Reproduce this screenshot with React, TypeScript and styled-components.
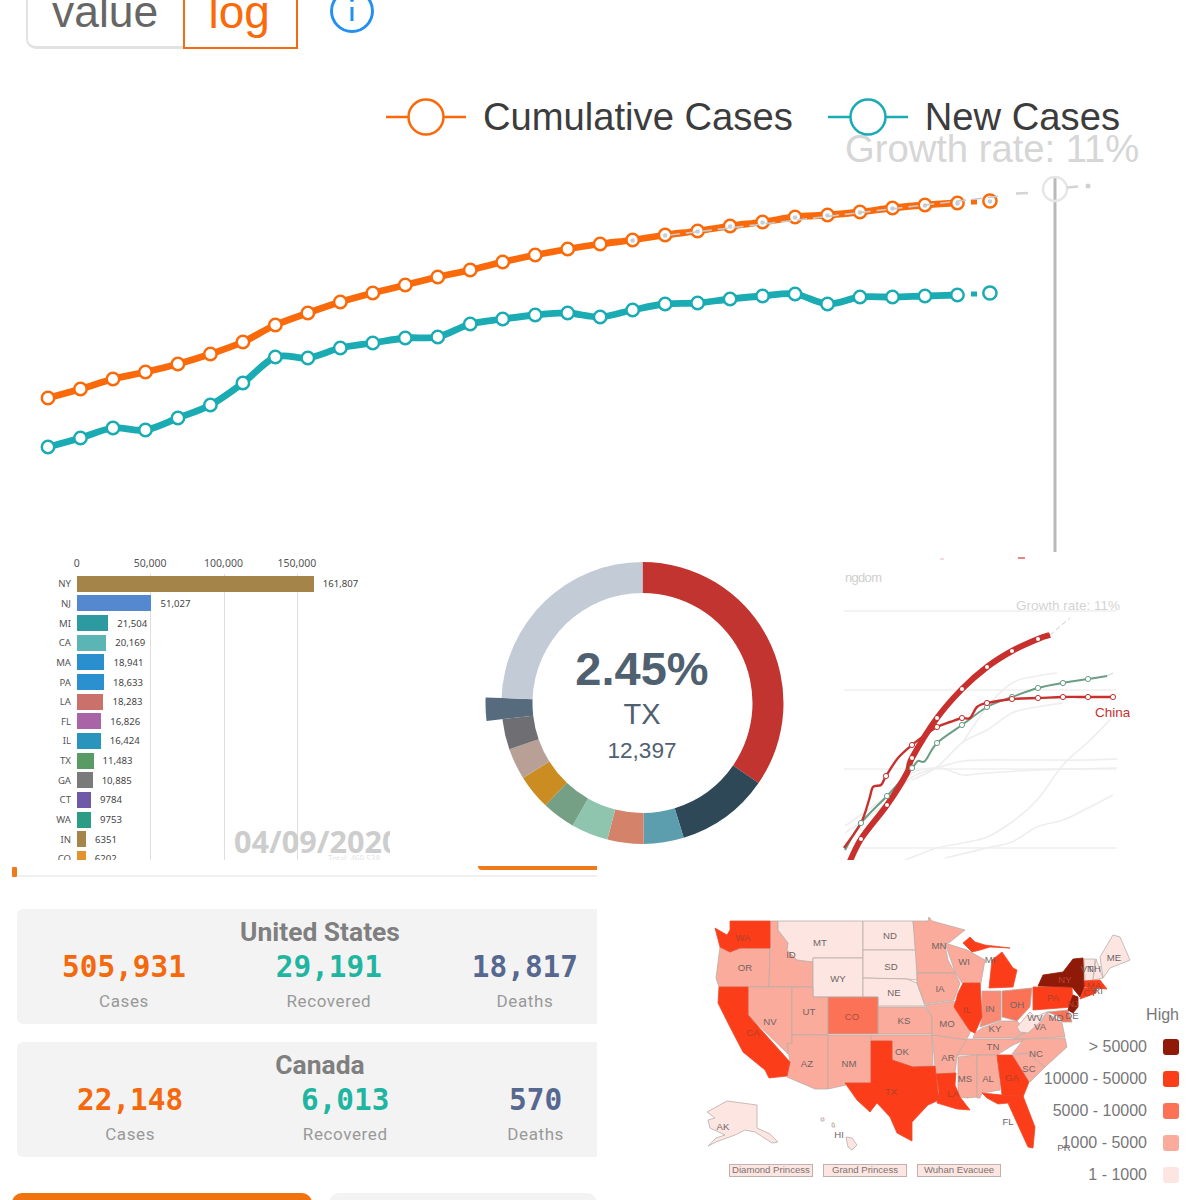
import React from "react";
import styled, { createGlobalStyle } from "styled-components";

const SANS = `"Liberation Sans", Arial, sans-serif`;
const ORANGE = "#fa6a0a";
const TEAL = "#1aabb3";

const Global = createGlobalStyle`
  html, body { margin: 0; padding: 0; background: #fff; }
  #root { width: 1200px; height: 1200px; }
`;

const Page = styled.div`
  width: 1200px;
  height: 1200px;
  overflow: hidden;
  background: #fff;
  display: flex;
  flex-direction: column;
  font-family: ${SANS};
`;

const smooth = (a: number[][], k = 0.16) => {
  let d = `M${a[0][0]} ${a[0][1]}`;
  for (let i = 0; i < a.length - 1; i++) {
    const p0 = a[Math.max(i - 1, 0)];
    const p1 = a[i];
    const p2 = a[i + 1];
    const p3 = a[Math.min(i + 2, a.length - 1)];
    const c1 = [p1[0] + (p2[0] - p0[0]) * k, p1[1] + (p2[1] - p0[1]) * k];
    const c2 = [p2[0] - (p3[0] - p1[0]) * k, p2[1] - (p3[1] - p1[1]) * k];
    d += `C${c1[0].toFixed(1)} ${c1[1].toFixed(1)} ${c2[0].toFixed(1)} ${c2[1].toFixed(1)} ${p2[0]} ${p2[1]}`;
  }
  return d;
};

/* ---------- top line chart ---------- */
const TopPanel = styled.section`
  height: 552px;
  flex: none;
  overflow: hidden;
  display: flex;
  flex-direction: column;
`;
const Toolbar = styled.div`
  height: 49px;
  flex: none;
  display: flex;
  align-items: flex-end;
  padding-left: 26px;
`;
const ToggleGroup = styled.div`
  display: flex;
  height: 90px;
  flex: none;
`;
const ToggleOption = styled.div`
  width: 157px;
  box-sizing: border-box;
  border: 2px solid #e2e2e2;
  border-bottom-width: 3px;
  border-right: none;
  border-radius: 0 0 0 10px;
  color: #666;
  font-size: 44.4px;
  line-height: 50px;
  padding: 26px 0 0 24px;
`;
const ToggleActive = styled.div`
  width: 115px;
  box-sizing: border-box;
  border: 2.5px solid #f46b16;
  color: ${ORANGE};
  font-size: 46px;
  line-height: 50px;
  padding: 26px 0 0 23.5px;
`;
const InfoIcon = styled.svg`
  width: 46px;
  height: 46px;
  flex: none;
  margin: 0 0 15px 31px;
`;
const Legend = styled.div`
  flex: none;
  display: flex;
  align-items: center;
  justify-content: flex-end;
  height: 36px;
  margin-top: 50px;
  padding-right: 80px;
  gap: 35px;
  position: relative;
  z-index: 1;
`;
const LegendItem = styled.div`
  display: flex;
  align-items: center;
  gap: 17px;
`;
const LegendMark = styled.svg`
  width: 80px;
  height: 36px;
  flex: none;
  overflow: visible;
`;
const LegendText = styled.span`
  font-size: 38.2px;
  line-height: 36px;
  color: #3c3c3c;
  white-space: nowrap;
`;
const ChartSvg = styled.svg`
  flex: 1;
  min-height: 0;
  width: 1200px;
  display: block;
  overflow: visible;
`;

const STEP = 32.48;
const orangeY = [398, 389, 379, 372, 364, 354, 342, 325, 313, 302, 293, 285, 277, 270, 262, 255, 249, 244, 240, 235, 231, 226, 222, 217, 215, 212, 208, 205, 203, 201];
const tealY = [447, 438, 428, 430, 418, 405, 383, 357, 358, 348, 343, 338, 337, 324, 319, 315, 313, 317, 310, 304, 303, 299, 296, 294, 304, 297, 297, 296, 295, 293];
const xAt = (i: number) => 48 + i * STEP;

const Series: React.FC<{ ys: number[]; color: string; dots?: boolean }> = ({ ys, color, dots }) => {
  const n = ys.length;
  const body = ys.slice(0, n - 1).map((y, i) => [Number(xAt(i).toFixed(1)), y]);
  return (
    <g>
      <path d={smooth(body)} fill="none" stroke={color} strokeWidth={6.8} strokeLinejoin="round" />
      <rect x={971} y={(ys[n - 1] + ys[n - 2]) / 2 - 2.5} width={6} height={5} fill={color} />
      {ys.map((y, i) => (
        <circle key={i} cx={xAt(i)} cy={y} r={i === n - 1 ? 6.6 : 6.2} fill="#fff" stroke={color} strokeWidth={2.5} />
      ))}
      {dots &&
        ys.map((y, i) =>
          i > 17 ? <circle key={i} cx={xAt(i)} cy={y + 0.5} r={2.3} fill="#c4cfdc" /> : null
        )}
    </g>
  );
};

const LineChart = () => (
  <ChartSvg viewBox="0 135 1200 417" preserveAspectRatio="none">
    <text x={845} y={162} fontSize={38.2} fill="#d6d6d6" fontFamily={SANS}>Growth rate: 11%</text>
    <line x1={1055} y1={177} x2={1055} y2={552} stroke="#b9b9b9" strokeWidth={3} />
    <circle cx={1055} cy={189} r={12} fill="none" stroke="#e6e6e6" strokeWidth={2.5} />
    <line x1={1016} y1={193.5} x2={1028} y2={193} stroke="#d4d4d4" strokeWidth={2.5} />
    <line x1={1067} y1={187.5} x2={1078} y2={186.5} stroke="#d4d4d4" strokeWidth={2.5} />
    <circle cx={1088} cy={186} r={2.5} fill="#d0d0d0" />
    <Series ys={orangeY} color={ORANGE} dots />
    <Series ys={tealY} color={TEAL} />
    <line x1={670} y1={235} x2={1001} y2={196} stroke="#c9c9c9" strokeWidth={1.6} strokeDasharray="10 6" />
  </ChartSvg>
);

/* ---------- middle row ---------- */
const MiddleRow = styled.section`
  height: 308px;
  flex: none;
  display: flex;
`;
const BarPanel = styled.div`
  width: 390px;
  flex: none;
  overflow: hidden;
  position: relative;
  display: flex;
  flex-direction: column;
  font-family: "Noto Sans", sans-serif;
`;
const AxisRow = styled.div`
  height: 22px;
  flex: none;
  display: flex;
  align-items: center;
  padding-left: 40px;
  box-sizing: border-box;
`;
const AxisTick = styled.span`
  width: 73.4px;
  text-align: center;
  font-size: 10.5px;
  color: #555;
`;
const Plot = styled.div`
  flex: 1;
  min-height: 0;
  overflow: hidden;
  background:
    linear-gradient(#dedede, #dedede) 150px 0 / 1px 100% no-repeat,
    linear-gradient(#dedede, #dedede) 224px 0 / 1px 100% no-repeat,
    linear-gradient(#dedede, #dedede) 297px 0 / 1px 100% no-repeat;
`;
const BarRow = styled.div`
  height: 19.65px;
  display: flex;
  align-items: center;
  font-size: 9.6px;
  color: #555;
`;
const BarLabel = styled.span`
  width: 71px;
  flex: none;
  text-align: right;
  margin-right: 5.7px;
`;
const BarFill = styled.div<{ $color: string }>`
  height: 16px;
  flex: none;
  background: ${(p) => p.$color};
`;
const BarValue = styled.span`
  margin-left: 9px;
  color: #444;
`;
const DateStamp = styled.div`
  position: absolute;
  left: 234px;
  top: 270px;
  font-size: 30.6px;
  line-height: 38px;
  font-weight: 700;
  color: #cdcdcd;
  white-space: nowrap;
`;
const TotalStamp = styled.div`
  position: absolute;
  left: 328px;
  top: 302px;
  font-size: 8px;
  line-height: 10px;
  color: #e4e4e4;
  white-space: nowrap;
`;

const bars: [string, number, string][] = [
  ["NY", 161807, "#a5844a"],
  ["NJ", 51027, "#5589cf"],
  ["MI", 21504, "#2c9aa0"],
  ["CA", 20169, "#5cb5b5"],
  ["MA", 18941, "#2a8fcf"],
  ["PA", 18633, "#2a90cf"],
  ["LA", 18283, "#c9716a"],
  ["FL", 16826, "#a964a8"],
  ["IL", 16424, "#2a94bd"],
  ["TX", 11483, "#5a9a63"],
  ["GA", 10885, "#7a7a7a"],
  ["CT", 9784, "#6f5aa8"],
  ["WA", 9753, "#2a9d84"],
  ["IN", 6351, "#a5854a"],
  ["CO", 6202, "#e3922e"],
];
const fmt = (n: number) => (n >= 10000 ? n.toLocaleString("en-US") : String(n));

const BarRace = () => (
  <BarPanel>
    <AxisRow>
      {["0", "50,000", "100,000", "150,000"].map((t) => (
        <AxisTick key={t}>{t}</AxisTick>
      ))}
    </AxisRow>
    <Plot>
      {bars.map(([s, v, c]) => (
        <BarRow key={s}>
          <BarLabel>{s}</BarLabel>
          <BarFill $color={c} style={{ width: `${(v * 237) / 161807}px` }} />
          <BarValue>{fmt(v)}</BarValue>
        </BarRow>
      ))}
    </Plot>
    <DateStamp>04/09/2020</DateStamp>
    <TotalStamp>Total: 469,538</TotalStamp>
  </BarPanel>
);

const DonutPanel = styled.div`
  width: 453px;
  flex: none;
  position: relative;
`;
const DonutSvg = styled.svg`
  width: 453px;
  height: 308px;
  display: block;
`;
const DonutCenter = styled.div`
  position: absolute;
  left: 152px;
  top: 90px;
  width: 200px;
  display: flex;
  flex-direction: column;
  align-items: center;
  color: #4f6070;
`;
const DonutPct = styled.div`
  font-size: 47px;
  line-height: 54px;
  font-weight: 700;
`;
const DonutName = styled.div`
  font-size: 29px;
  line-height: 37px;
`;
const DonutCount = styled.div`
  font-size: 22.6px;
  line-height: 35px;
`;

const polar = (r: number, deg: number) => {
  const a = (deg * Math.PI) / 180;
  return [642.5 + r * Math.sin(a), 703 - r * Math.cos(a)];
};
const sector = (a0: number, a1: number, r0: number, r1: number) => {
  const [x0, y0] = polar(r1, a0);
  const [x1, y1] = polar(r1, a1);
  const [x2, y2] = polar(r0, a1);
  const [x3, y3] = polar(r0, a0);
  const large = a1 - a0 > 180 ? 1 : 0;
  return `M${x0} ${y0}A${r1} ${r1} 0 ${large} 1 ${x1} ${y1}L${x2} ${y2}A${r0} ${r0} 0 ${large} 0 ${x3} ${y3}Z`;
};
const slices: [number, number, string, number][] = [
  [0, 124.6, "#c23430", 141],
  [124.6, 163, "#2f4858", 141],
  [163, 179.5, "#5c9eae", 141],
  [179.5, 194.4, "#d4826a", 141],
  [194.4, 209.7, "#8fc5ae", 141],
  [209.7, 223.5, "#75a085", 141],
  [223.5, 237.9, "#cb8d22", 141],
  [237.9, 250.8, "#b8a097", 141],
  [250.8, 263.4, "#6e6e73", 141],
  [263.4, 272, "#566b7d", 157],
  [272, 360, "#c3ccd6", 141],
];

const Donut = () => (
  <DonutPanel>
    <DonutSvg viewBox="390 552 453 308">
      {slices.map(([a, b, c, r]) => (
        <path key={a} d={sector(a, b, 110, r)} fill={c} />
      ))}
    </DonutSvg>
    <DonutCenter>
      <DonutPct>2.45%</DonutPct>
      <DonutName>TX</DonutName>
      <DonutCount>12,397</DonutCount>
    </DonutCenter>
  </DonutPanel>
);

const TrajPanel = styled.div`
  width: 287px;
  flex: none;
  overflow: hidden;
`;
const TrajSvg = styled.svg`
  width: 287px;
  height: 308px;
  display: block;
`;
const thick = [[847, 868], [861, 839], [887, 805], [907, 773], [912, 758], [937, 718], [962, 689], [987, 667], [1012, 651], [1038, 639], [1050, 635]];
const china = [[844, 848], [861, 823], [869, 800], [873, 787], [881, 785], [886, 776], [898, 758], [912, 745], [925, 735], [937, 727], [950, 722], [962, 718], [970, 718], [977, 707], [987, 703], [1012, 699], [1038, 698], [1063, 697], [1088, 697], [1113, 697]];
const green = [[845, 850], [861, 823], [887, 796], [912, 768], [918, 761], [925, 761], [937, 743], [962, 725], [987, 707], [1012, 697], [1038, 688], [1063, 683], [1088, 679], [1107, 676]];
const faint = [
  [[905, 860], [937, 848], [963, 843], [987, 837], [1012, 822], [1037, 800], [1063, 765], [1088, 742], [1110, 720]],
  [[945, 858], [987, 848], [1012, 842], [1037, 827], [1063, 820], [1088, 808], [1113, 795]],
  [[845, 833], [887, 803], [912, 777], [940, 767], [963, 761], [987, 760], [1013, 760], [1037, 760], [1088, 760], [1117, 759]],
  [[845, 826], [887, 796], [912, 773], [940, 768], [963, 775], [987, 773], [1037, 770], [1117, 768]],
  [[912, 780], [937, 767], [963, 742], [987, 730], [1012, 713], [1037, 707], [1063, 703]],
  [[963, 742], [987, 707], [1012, 683], [1037, 676], [1057, 673]],
];

const Trajectories = () => (
  <TrajPanel>
    <TrajSvg viewBox="843 552 287 308">
      <text x={845} y={582} fontSize={13} fill="#cfcfcf" fontFamily={SANS} textLength={37}>ngdom</text>
      {[611, 690, 769, 848].map((y) => (
        <line key={y} x1={844} x2={1116} y1={y} y2={y} stroke="#e8e8e8" strokeWidth={1.2} />
      ))}
      <line x1={940} x2={944} y1={559} y2={559} stroke="#e8b8b8" strokeWidth={1} />
      <line x1={1018} x2={1025} y1={558} y2={558} stroke="#d86060" strokeWidth={1.5} />
      <text x={1016} y={610} fontSize={13.5} fill="#d4d4d4" fontFamily={SANS}>Growth rate: 11%</text>
      {faint.map((l, i) => (
        <path key={i} d={smooth(l)} fill="none" stroke="#eeeeee" strokeWidth={1.6} />
      ))}
      <line x1={1050} y1={635} x2={1070} y2={618} stroke="#cfcfcf" strokeWidth={1} strokeDasharray="5 3" />
      <line x1={1107} y1={676} x2={1113} y2={673} stroke="#cfcfcf" strokeWidth={1} />
      <path d={smooth(green)} fill="none" stroke="#6a9e84" strokeWidth={2} />
      <path d={smooth(china)} fill="none" stroke="#c8302e" strokeWidth={2.4} />
      <path d={smooth(thick)} fill="none" stroke="#c8302e" strokeWidth={6} />
      {[[861, 823], [887, 796], [912, 768], [937, 743], [962, 725], [987, 707], [1012, 697], [1038, 688], [1063, 683], [1088, 679]].map(([x, y]) => (
        <circle key={x} cx={x} cy={y} r={2.6} fill="#fff" stroke="#6a9e84" strokeWidth={1} />
      ))}
      {[[861, 839], [887, 805], [912, 758], [937, 718], [962, 689], [987, 667], [1012, 651], [1038, 639]].map(([x, y]) => (
        <circle key={x} cx={x} cy={y} r={2} fill="#fff" />
      ))}
      {[[886, 776], [912, 745], [937, 727], [962, 718], [987, 703], [1012, 699], [1038, 698], [1063, 697], [1088, 697], [1113, 697]].map(([x, y]) => (
        <circle key={x} cx={x} cy={y} r={2.6} fill="#fff" stroke="#c8302e" strokeWidth={1} />
      ))}
      <text x={1095} y={717} fontSize={13.5} fill="#c8302e" fontFamily={SANS}>China</text>
    </TrajSvg>
  </TrajPanel>
);

/* ---------- bottom row ---------- */
const BottomRow = styled.section`
  flex: 1;
  min-height: 0;
  display: flex;
`;
const StatsColumn = styled.div`
  width: 597px;
  flex: none;
  box-sizing: border-box;
  padding-left: 12px;
  display: flex;
  flex-direction: column;
`;
const TabStrip = styled.div`
  height: 17px;
  flex: none;
  box-sizing: border-box;
  display: flex;
  justify-content: space-between;
  align-items: flex-start;
  border-bottom: 2px solid #f0f0f0;
  margin-left: 5px;
  position: relative;
`;
const TabTick = styled.div`
  position: absolute;
  left: -5px;
  top: 7px;
  width: 5px;
  height: 10px;
  border-radius: 1px;
  background: #ee7a1a;
`;
const TabPill = styled.div`
  width: 119px;
  height: 4px;
  margin: 6px 0 0 auto;
  background: #ee7a1a;
  border-radius: 0 0 0 6px;
`;
const CardStack = styled.div`
  margin: 32px 0 0 5px;
  display: flex;
  flex-direction: column;
  gap: 18px;
`;
const Card = styled.div`
  height: 115px;
  background: #f3f3f3;
  border-radius: 6px 0 0 6px;
  display: flex;
  flex-direction: column;
  padding-top: 8px;
  box-sizing: border-box;
`;
const CardTitle = styled.div`
  font-family: Roboto, sans-serif;
  font-weight: 700;
  font-size: 26.4px;
  line-height: 30px;
  text-align: center;
  color: #7f7f7f;
  padding-left: 26px;
`;
const StatRow = styled.div<{ $left: number; $right: number }>`
  display: flex;
  justify-content: space-between;
  margin-top: 2px;
  padding: 0 ${(p) => p.$right}px 0 ${(p) => p.$left}px;
`;
const Stat = styled.div`
  display: flex;
  flex-direction: column;
  align-items: center;
`;
const StatNumber = styled.div<{ $color: string }>`
  font-family: "DejaVu Sans Mono", monospace;
  font-weight: 700;
  font-size: 29.4px;
  line-height: 36px;
  color: ${(p) => p.$color};
`;
const StatLabel = styled.div`
  font-family: Roboto, sans-serif;
  font-size: 17px;
  letter-spacing: 0.6px;
  line-height: 20px;
  margin-top: 6px;
  color: #999;
  white-space: nowrap;
`;
const ActionRow = styled.div`
  display: flex;
  gap: 17px;
  margin-top: 36px;
`;
const PrimaryAction = styled.div`
  width: 300px;
  height: 40px;
  background: #f0730f;
  border-radius: 10px 10px 0 0;
`;
const SecondaryAction = styled.div`
  flex: 1;
  height: 40px;
  background: #f3f3f3;
  border-radius: 10px 10px 0 0;
`;

const C_ORANGE = "#f4690e";
const C_TEAL = "#1fb5a0";
const C_BLUE = "#56688f";

const CountryCard: React.FC<{ name: string; left: number; right: number; vals: [string, string, string] }> = ({ name, left, right, vals }) => (
  <Card>
    <CardTitle>{name}</CardTitle>
    <StatRow $left={left} $right={right}>
      <Stat>
        <StatNumber $color={C_ORANGE}>{vals[0]}</StatNumber>
        <StatLabel>Cases</StatLabel>
      </Stat>
      <Stat>
        <StatNumber $color={C_TEAL}>{vals[1]}</StatNumber>
        <StatLabel>Recovered</StatLabel>
      </Stat>
      <Stat>
        <StatNumber $color={C_BLUE}>{vals[2]}</StatNumber>
        <StatLabel>Deaths</StatLabel>
      </Stat>
    </StatRow>
  </Card>
);

const MapPanel = styled.div`
  flex: 1;
  position: relative;
  display: flex;
  flex-direction: column;
`;
const MapSvg = styled.svg`
  width: 603px;
  height: 304px;
  display: block;
  flex: none;
  overflow: visible;
`;
const TagRow = styled.div`
  display: flex;
  gap: 10px;
  padding-left: 132px;
`;
const Tag = styled.div`
  width: 84px;
  height: 12.5px;
  box-sizing: border-box;
  border: 1px solid #bdb2b0;
  background: #fde6e2;
  color: #7c7270;
  font-size: 9.6px;
  line-height: 10.5px;
  text-align: center;
  white-space: nowrap;
`;
const MapLegend = styled.div`
  position: absolute;
  right: 21px;
  top: 145px;
  display: flex;
  flex-direction: column;
  align-items: flex-end;
  color: #777;
`;
const MapLegendTitle = styled.div`
  font-size: 16px;
  line-height: 20px;
  margin-bottom: 6px;
`;
const MapLegendRow = styled.div`
  height: 32px;
  display: flex;
  align-items: center;
  gap: 16px;
  font-size: 16px;
  white-space: nowrap;
`;
const Swatch = styled.div<{ $color: string }>`
  width: 16px;
  height: 16px;
  border-radius: 3px;
  background: ${(p) => p.$color};
`;

const DARK = "#8f1a08";
const RED = "#fc3d1a";
const MID = "#fb7256";
const LOW = "#fbab9b";
const PALE = "#fde6e2";

const states: [string, string][] = [
  [LOW, "720,947 730,952 740,948 770,948 769,987 719,987 716,978"],
  [LOW, "770,921 778,921 778,930 788,943 787,950 797,960 813,962 813,987 769,987 770,948"],
  [PALE, "778,921 863,921 863,958 813,958 813,962 797,960 787,950 788,943 778,930"],
  [PALE, "813,958 863,958 863,997 813,997"],
  [PALE, "863,921 913,921 917,950 863,950"],
  [PALE, "863,950 917,950 917,980 907,979 863,978"],
  [PALE, "863,978 907,979 917,983 925,1006 878,1006 878,997 863,997"],
  [LOW, "748,987 792,987 792,1043 787,1044 788,1054 748,1015"],
  [LOW, "792,987 813,987 813,997 828,997 828,1035 792,1035"],
  [LOW, "792,1035 828,1035 828,1089 815,1089 787,1077 790,1062 787,1044 792,1043"],
  [LOW, "828,1035 871,1035 871,1083 845,1083 846,1085 828,1089"],
  [LOW, "878,1007 925,1007 932,1017 932,1034 878,1034"],
  [LOW, "871,1035 932,1035 933,1065 913,1067 892,1060 892,1041 871,1041"],
  [LOW, "913,921 928,921 929,917 932,921 965,930 950,942 945,945 948,960 955,973 917,973"],
  [LOW, "917,973 955,973 960,983 954,1000 925,1004 917,983"],
  [LOW, "925,1005 954,1001 970,1033 966,1040 932,1035 932,1017"],
  [LOW, "932,1035 967,1040 957,1057 955,1073 936,1075 935,1066"],
  [LOW, "945,943 967,950 985,960 980,988 962,983 955,972"],
  [LOW, "975,1033 982,1028 1001,1021 1017,1021 1027,1032 1013,1038 973,1038"],
  [LOW, "967,1039 1027,1039 1013,1045 997,1055 957,1055"],
  [LOW, "958,1057 977,1055 977,1097 967,1098 958,1097"],
  [LOW, "977,1055 997,1055 1000,1090 982,1093 980,1098 977,1098"],
  [LOW, "1012,1055 1027,1053 1045,1067 1030,1082"],
  [LOW, "1024,1039 1065,1038 1067,1047 1045,1067 1027,1053 1012,1054"],
  [LOW, "1027,1032 1040,1023 1047,1013 1062,1023 1065,1037 1013,1039"],
  [PALE, "1017,1027 1030,1012 1035,1017 1047,1012 1040,1022 1028,1033 1020,1032"],
  [PALE, "1084,959 1095,959 1093,980 1085,981"],
  [PALE, "1096,959 1103,978 1093,980"],
  [PALE, "1100,957 1113,935 1120,937 1130,960 1110,968 1103,978"],
  [PALE, "707,1112 727,1101 757,1105 757,1128 770,1134 778,1142 772,1143 755,1132 745,1130 735,1135 716,1142 708,1146 716,1138 725,1135 710,1128 708,1120 715,1118"],
  [PALE, "846,1137 852,1138 857,1145 852,1150 848,1147"],
  [PALE, "821,1118 824,1118 824,1121 821,1121"],
  [PALE, "832,1123 834,1123 835,1127 832,1127"],
  [MID, "828,997 878,997 878,1034 828,1034"],
  ["#fb8a75", "982,991 1001,991 1001,1020 980,1027 982,1017"],
  [MID, "1002,991 1032,988 1030,1007 1017,1021 1002,1017"],
  [MID, "1047,1012 1068,1010 1072,1022 1062,1022 1058,1016"],
  [RED, "730,921 770,921 770,948 740,948 730,952 720,947 715,928 727,935 730,930"],
  [RED, "719,987 748,987 748,1015 790,1062 787,1076 769,1078 765,1070 743,1052 730,1027 718,1003"],
  [RED, "871,1041 892,1041 892,1060 913,1067 935,1066 939,1100 928,1105 912,1122 912,1141 897,1133 890,1117 877,1103 870,1112 857,1100 845,1083 871,1083"],
  [RED, "936,1074 956,1073 955,1085 960,1097 970,1110 957,1109 937,1103 939,1092"],
  [RED, "963,983 980,983 982,1017 975,1033 970,1031 954,1007 958,993"],
  [RED, "963,943 970,937 975,942 985,945 1010,948 990,947 980,950 972,952"],
  [RED, "989,988 992,960 1002,952 1013,968 1017,970 1013,987"],
  [RED, "997,1055 1012,1055 1029,1082 1023,1097 1002,1095"],
  [RED, "982,1093 1002,1095 1023,1096 1035,1127 1033,1148 1028,1147 1017,1123 1008,1103 998,1104 987,1098"],
  [RED, "1033,987 1072,987 1073,1007 1033,1010"],
  [RED, "1084,981 1100,980 1107,989 1084,987"],
  [RED, "1084,988 1097,988 1096,993 1080,999"],
  [DARK, "1043,975 1063,972 1073,959 1083,958 1084,987 1080,997 1072,987 1038,986"],
  [DARK, "1073,995 1078,997 1078,1007 1073,1013 1068,1010"],
];

const strokeFor = (c: string) => (c === RED ? "#f0492a" : c === DARK ? "#8f1a08" : "#b9adaa");

const labels: [string, number, number, string?][] = [
  ["WA", 743, 937, "#b04028"], ["OR", 745, 967], ["ID", 791, 954], ["MT", 820, 942], ["ND", 890, 935], ["SD", 891, 966],
  ["WY", 838, 978], ["NE", 894, 992], ["NV", 770, 1021], ["UT", 809, 1011], ["CO", 852, 1016, "#a85040"], ["KS", 904, 1020],
  ["CA", 753, 1032, "#b04028"], ["AZ", 807, 1063], ["NM", 849, 1063], ["OK", 902, 1051], ["TX", 891, 1091, "#b04028"],
  ["AK", 723, 1126], ["HI", 839, 1134], ["MN", 939, 945], ["WI", 964, 961], ["MI", 990, 959], ["IA", 940, 988],
  ["IL", 967, 1009, "#b04028"], ["IN", 990, 1008], ["OH", 1017, 1004], ["MO", 947, 1023], ["KY", 995, 1028], ["AR", 948, 1057],
  ["TN", 993, 1046], ["MS", 965, 1078], ["AL", 988, 1078], ["GA", 1012, 1077, "#b04028"], ["SC", 1029, 1068], ["NC", 1036, 1053],
  ["LA", 953, 1093, "#b04028"], ["FL", 1008, 1121], ["PR", 1064, 1147], ["WV", 1035, 1017], ["VA", 1040, 1026], ["PA", 1053, 997, "#b04028"],
  ["NY", 1065, 979, "#b84030"], ["MD", 1056, 1017], ["DE", 1072, 1015], ["NJ", 1073, 1003, "#b84030"], ["VT", 1087, 968], ["NH", 1094, 968],
  ["ME", 1114, 957], ["MA", 1094, 985, "#b04028"], ["CT", 1090, 992, "#b04028"], ["RI", 1098, 990],
];

const legendRows: [string, string][] = [
  ["> 50000", DARK],
  ["10000 - 50000", RED],
  ["5000 - 10000", MID],
  ["1000 - 5000", LOW],
  ["1 - 1000", PALE],
];

const UsMap = () => (
  <MapPanel>
    <MapSvg viewBox="597 860 603 304">
      {states.map(([c, p], i) => (
        <polygon key={i} points={p} fill={c} stroke={strokeFor(c)} strokeWidth={0.8} strokeLinejoin="round" />
      ))}
      {labels.map(([t, x, y, c]) => (
        <text key={t} x={x} y={y + 3.5} fontSize={9.6} textAnchor="middle" fill={c ?? "#6f6565"} fontFamily={SANS}>{t}</text>
      ))}
    </MapSvg>
    <TagRow>
      <Tag>Diamond Princess</Tag>
      <Tag>Grand Princess</Tag>
      <Tag>Wuhan Evacuee</Tag>
    </TagRow>
    <MapLegend>
      <MapLegendTitle>High</MapLegendTitle>
      {legendRows.map(([t, c]) => (
        <MapLegendRow key={t}>
          {t}
          <Swatch $color={c} />
        </MapLegendRow>
      ))}
    </MapLegend>
  </MapPanel>
);

export default function App() {
  return (
    <Page>
      <Global />
      <TopPanel>
        <Toolbar>
          <ToggleGroup>
            <ToggleOption>value</ToggleOption>
            <ToggleActive>log</ToggleActive>
          </ToggleGroup>
          <InfoIcon viewBox="0 0 46 46">
            <circle cx="23" cy="23" r="20.5" fill="none" stroke="#2490f0" strokeWidth="3" />
            <circle cx="23" cy="12" r="2" fill="#2490f0" />
            <line x1="23" y1="19" x2="23" y2="33" stroke="#2490f0" strokeWidth="3" />
          </InfoIcon>
        </Toolbar>
        <Legend>
          <LegendItem>
            <LegendMark viewBox="0 0 80 36">
              <line x1="0" y1="18" x2="80" y2="18" stroke={ORANGE} strokeWidth="2.5" />
              <circle cx="40" cy="18" r="17.5" fill="#fff" stroke={ORANGE} strokeWidth="2.5" />
            </LegendMark>
            <LegendText>Cumulative Cases</LegendText>
          </LegendItem>
          <LegendItem>
            <LegendMark viewBox="0 0 80 36">
              <line x1="0" y1="18" x2="80" y2="18" stroke={TEAL} strokeWidth="2.5" />
              <circle cx="40" cy="18" r="17.5" fill="#fff" stroke={TEAL} strokeWidth="2.5" />
            </LegendMark>
            <LegendText>New Cases</LegendText>
          </LegendItem>
        </Legend>
        <LineChart />
      </TopPanel>
      <MiddleRow>
        <BarRace />
        <Donut />
        <Trajectories />
      </MiddleRow>
      <BottomRow>
        <StatsColumn>
          <TabStrip>
            <TabTick />
            <TabPill />
          </TabStrip>
          <CardStack>
            <CountryCard name="United States" left={45} right={19} vals={["505,931", "29,191", "18,817"]} />
            <CountryCard name="Canada" left={60} right={33} vals={["22,148", "6,013", "570"]} />
          </CardStack>
          <ActionRow>
            <PrimaryAction />
            <SecondaryAction />
          </ActionRow>
        </StatsColumn>
        <UsMap />
      </BottomRow>
    </Page>
  );
}
